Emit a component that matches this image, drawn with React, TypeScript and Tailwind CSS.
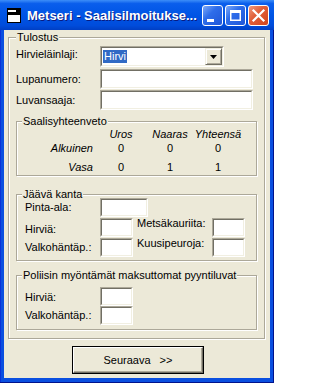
import React from 'react';

const Sunken: React.FC<{ className?: string; children?: React.ReactNode }> = ({ className = '', children }) => (
  <div className={`border border-t-[#ACA899] border-l-[#ACA899] border-b-white border-r-white ${className}`}>
    <div className="h-full w-full border border-t-[#716F64] border-l-[#716F64] border-b-[#F1EFE2] border-r-[#F1EFE2] bg-white flex">
      {children}
    </div>
  </div>
);

const Group: React.FC<{ title: string; className?: string; legendClass?: string; children: React.ReactNode }> = ({
  title,
  className = '',
  legendClass = 'ml-[5px]',
  children,
}) => (
  <fieldset
    className={`border border-[#ACA899] shadow-[inset_1px_1px_0_#fff,1px_1px_0_#fff] ${className}`}
  >
    <legend className={`px-px leading-[12px] bg-[#ECE9D8] ${legendClass}`}>{title}</legend>
    {children}
  </fieldset>
);

function TitleButton({ kind }: { kind: 'min' | 'max' | 'close' }) {
  const bg =
    kind === 'close'
      ? 'bg-[linear-gradient(135deg,#F19A7D_0%,#E1603A_40%,#D2441C_100%)]'
      : 'bg-[linear-gradient(135deg,#7EAAF8_0%,#2E6DEA_40%,#1F56D8_100%)]';
  return (
    <div className={`w-[21px] h-[21px] rounded-[3px] border border-white ${bg} flex items-center justify-center`}>
      <svg width="19" height="19" viewBox="0 0 19 19">
        {kind === 'min' && <rect x="4" y="13" width="7" height="3" fill="#fff" />}
        {kind === 'max' && (
          <g fill="#fff">
            <rect x="4" y="4" width="11" height="3" />
            <rect x="4" y="4" width="1.5" height="11" />
            <rect x="13.5" y="4" width="1.5" height="11" />
            <rect x="4" y="13.5" width="11" height="1.5" />
          </g>
        )}
        {kind === 'close' && (
          <path d="M4.5 4.5 L14.5 14.5 M14.5 4.5 L4.5 14.5" stroke="#fff" strokeWidth="2.2" strokeLinecap="square" />
        )}
      </svg>
    </div>
  );
}

function FieldRow({ label, labelClass = '', children }: { label: string; labelClass?: string; children: React.ReactNode }) {
  return (
    <div className="flex items-center">
      <div className={`w-[84px] ${labelClass}`}>{label}</div>
      {children}
    </div>
  );
}

// label box the same height as an input; padding nudges the text up or down
function Label({ text, className = '' }: { text: string; className?: string }) {
  return <div className={`w-[75px] h-[19px] flex items-center whitespace-nowrap ${className}`}>{text}</div>;
}

export default function App() {
  return (
    <div className="w-[274px] h-[383px] flex flex-col font-['Liberation_Sans',Arial,sans-serif] text-[11px] leading-[13px] text-black bg-[#0A4FE0]">
      {/* title bar */}
      <div className="h-[30px] shrink-0 flex items-center pl-[7px] pr-[5px] bg-[linear-gradient(to_bottom,#3D8EF8_0%,#0A5EEC_12%,#0055E5_50%,#004CDB_85%,#003FC4_100%)]">
        <svg width="14" height="15" viewBox="0 0 14 15" className="shrink-0">
          <rect x="0" y="0" width="14" height="15" fill="#000" />
          <rect x="1" y="7" width="12" height="7" fill="#fff" />
          <rect x="1" y="2" width="8" height="2" fill="#fff" />
        </svg>
        <div className="ml-[6px] pt-[2px] text-white font-bold text-[13px] leading-[16px] whitespace-nowrap [text-shadow:1px_1px_0_#0A1A80]">
          Metseri - Saalisilmoitukse...
        </div>
        <div className="ml-auto flex gap-[2px]">
          <TitleButton kind="min" />
          <TitleButton kind="max" />
          <TitleButton kind="close" />
        </div>
      </div>

      {/* window frame + client */}
      <div className="flex-1 px-1 pb-[5px] shadow-[inset_-1px_-1px_0_#00138C,inset_1px_0_0_#0831D9]">
        <div className="h-full bg-[#ECE9D8] flex flex-col">
          <Group title="Tulostus" className="mt-px ml-1 w-[257px] pb-[8px]" legendClass="ml-[7px]">
            <div className="pl-[7px] mt-[3px]">
              <FieldRow label="Hirvieläinlaji:" labelClass="pb-[5px]">
                <Sunken className="w-[124px] h-[21px]">
                  <div className="flex-1 pl-px">
                    <span className="mt-[2px] inline-block h-[13px] leading-[13px] px-px bg-[#316AC5] text-white">Hirvi</span>
                  </div>
                  <div className="w-[17px] h-full bg-[#ECE9D8] border border-t-[#F1EFE2] border-l-[#F1EFE2] border-b-[#716F64] border-r-[#716F64] shadow-[inset_1px_1px_0_#fff,inset_-1px_-1px_0_#ACA899] flex items-center justify-center">
                    <svg width="7" height="4" viewBox="0 0 7 4">
                      <path d="M0 0 H7 L3.5 4 Z" fill="#000" />
                    </svg>
                  </div>
                </Sunken>
              </FieldRow>
              <div className="mt-[2px]">
                <FieldRow label="Lupanumero:">
                  <Sunken className="w-[153px] h-[20px]" />
                </FieldRow>
              </div>
              <div className="mt-px">
                <FieldRow label="Luvansaaja:">
                  <Sunken className="w-[153px] h-[20px]" />
                </FieldRow>
              </div>
            </div>

            <Group title="Saalisyhteenveto" className="mt-[5px] ml-[7px] w-[241px] pb-px">
              <div className="grid grid-cols-[79px_50px_48px_48px] italic">
                <div className="h-[14px]" />
                <div className="h-[14px] leading-[14px] text-center">Uros</div>
                <div className="h-[14px] leading-[14px] text-center">Naaras</div>
                <div className="h-[14px] leading-[14px] text-center">Yhteensä</div>

                <div className="h-[14px] leading-[14px] text-right pr-[3px]">Alkuinen</div>
                <div className="h-[14px] leading-[14px] text-center not-italic">0</div>
                <div className="h-[14px] leading-[14px] text-center not-italic">0</div>
                <div className="h-[14px] leading-[14px] text-center not-italic">0</div>

                <div className="mt-[5px] h-[14px] leading-[14px] text-right pr-[3px]">Vasa</div>
                <div className="mt-[5px] h-[14px] leading-[14px] text-center not-italic">0</div>
                <div className="mt-[5px] h-[14px] leading-[14px] text-center not-italic">1</div>
                <div className="mt-[5px] h-[14px] leading-[14px] text-center not-italic">1</div>
              </div>
            </Group>

            <Group title="Jäävä kanta" className="mt-[12px] ml-[7px] w-[241px] pb-[3px]">
              <div className="pl-[8px] -mt-[2px] flex flex-col gap-px">
                <div className="flex items-center">
                  <Label text="Pinta-ala:" />
                  <Sunken className="w-[48px] h-[19px]" />
                </div>
                <div className="flex items-center">
                  <Label text="Hirviä:" className="pt-[4px]" />
                  <Sunken className="w-[33px] h-[19px]" />
                  <Label text="Metsäkauriita:" className="ml-[4px] pb-[8px]" />
                  <Sunken className="w-[33px] h-[19px]" />
                </div>
                <div className="flex items-center">
                  <Label text="Valkohäntäp.:" />
                  <Sunken className="w-[33px] h-[19px]" />
                  <Label text="Kuusipeuroja:" className="ml-[4px] pb-[8px]" />
                  <Sunken className="w-[33px] h-[19px]" />
                </div>
              </div>
            </Group>

            <Group title="Poliisin myöntämät maksuttomat pyyntiluvat" className="mt-[8px] ml-[7px] w-[241px] pb-[4px]">
              <div className="pl-[8px] mt-[6px] flex flex-col">
                <div className="flex items-center">
                  <Label text="Hirviä:" className="pt-[2px]" />
                  <Sunken className="w-[33px] h-[19px]" />
                </div>
                <div className="flex items-center">
                  <Label text="Valkohäntäp.:" />
                  <Sunken className="w-[33px] h-[19px]" />
                </div>
              </div>
            </Group>
          </Group>

          <div className="mt-[7px] ml-[68px] w-[132px] h-[28px] border border-black">
            <div className="h-full border border-t-white border-l-white border-b-[#716F64] border-r-[#716F64] shadow-[inset_-1px_-1px_0_#ACA899] flex items-center justify-center gap-[9px]">
              <span>Seuraava</span>
              <span>&gt;&gt;</span>
            </div>
          </div>
        </div>
      </div>
    </div>
  );
}
